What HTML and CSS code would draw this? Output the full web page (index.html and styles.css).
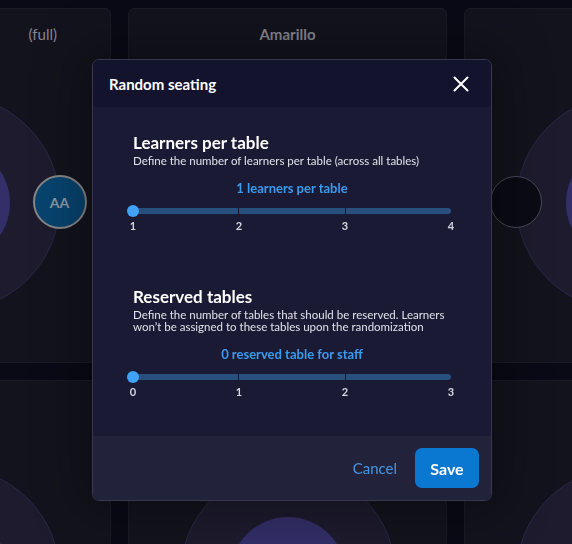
FILE: index.html
```html
<!DOCTYPE html>
<html>

<head>
    <title>Random seating</title>
    <link rel="stylesheet" href="styles.css">
</head>

<body>
    <div class="board">
        <div class="card">
            <div class="card-title card-title-end">(full)</div>
            <div class="table">
                <div class="table-core"></div>
                <div class="seat seat-right seat-taken">AA</div>
            </div>
        </div>
        <div class="card">
            <div class="card-title">Amarillo</div>
            <div class="table">
                <div class="table-core"></div>
            </div>
        </div>
        <div class="card">
            <div class="table">
                <div class="table-core"></div>
                <div class="seat seat-left"></div>
            </div>
        </div>
        <div class="card">
            <div class="table">
                <div class="table-core"></div>
            </div>
        </div>
        <div class="card">
            <div class="table">
                <div class="table-core"></div>
            </div>
        </div>
        <div class="card">
            <div class="table">
                <div class="table-core"></div>
            </div>
        </div>
    </div>

    <div class="backdrop">
        <div class="modal">
            <div class="modal-header">
                <h2>Random seating</h2>
                <button class="close" aria-label="Close">
                    <svg width="16" height="16" viewBox="0 0 16 16">
                        <path d="M1.5 1.5 L14.5 14.5 M14.5 1.5 L1.5 14.5" stroke="#fff" stroke-width="2" stroke-linecap="round" />
                    </svg>
                </button>
            </div>

            <div class="modal-body">
                <div class="field">
                    <h3>Learners per table</h3>
                    <p>Define the number of learners per table (across all tables)</p>
                    <div class="value">1 learners per table</div>
                    <div class="slider">
                        <div class="track"><span></span><span></span><span></span></div>
                        <div class="thumb"></div>
                    </div>
                    <div class="marks"><span>1</span><span>2</span><span>3</span><span>4</span></div>
                </div>

                <div class="field">
                    <h3>Reserved tables</h3>
                    <p>Define the number of tables that should be reserved. Learners won’t be assigned to these tables upon the randomization</p>
                    <div class="value">0 reserved table for staff</div>
                    <div class="slider">
                        <div class="track"><span></span><span></span><span></span></div>
                        <div class="thumb"></div>
                    </div>
                    <div class="marks"><span>0</span><span>1</span><span>2</span><span>3</span></div>
                </div>
            </div>

            <div class="modal-footer">
                <button class="button-link">Cancel</button>
                <button class="button">Save</button>
            </div>
        </div>
    </div>
</body>

</html>
```

FILE: styles.css
```css
html,
body {
    margin: 0;
    height: 100%;
    overflow: hidden;
}

body {
    background-color: #0a0a16;
    font-family: Lato, "Open Sans", sans-serif;
}

/* seating board behind the dialog */
.board {
    display: grid;
    grid-template-columns: repeat(3, 319px);
    grid-auto-rows: 355px;
    gap: 17px;
    padding-top: 8px;
    margin-left: -208px;
}

.card {
    position: relative;
    overflow: hidden;
    background-color: #13131d;
    border: 1px solid #1b1b27;
    border-radius: 6px;
}

.card-title {
    padding-top: 16px;
    text-align: center;
    font-size: 15px;
    font-weight: 700;
    color: #85858f;
    white-space: nowrap;
}

/* only the tail of this title is on screen */
.card-title-end {
    text-align: right;
    padding-right: 53px;
    font-weight: 400;
}

.table {
    position: absolute;
    top: 86px;
    left: 50%;
    width: 214px;
    height: 214px;
    margin-left: -108px;
    border-radius: 50%;
    background-color: #1d1b2d;
    border: 1px solid #2b284b;
    display: flex;
    align-items: center;
    justify-content: center;
}

.table-core {
    width: 116px;
    height: 116px;
    border-radius: 50%;
    background-color: #332f69;
}

.seat {
    position: absolute;
    top: 80px;
    width: 50px;
    height: 50px;
    border-radius: 50%;
    background-color: #0b0b16;
    border: 1px solid #4b4b55;
    display: flex;
    align-items: center;
    justify-content: center;
    font-size: 14px;
    font-weight: 700;
    color: #8a98a6;
}

.seat-right {
    right: -28px;
}

.seat-left {
    left: -27px;
}

.seat-taken {
    top: 79px;
    background-color: #07446f;
    border: 2px solid #878787;
}

/* dialog */
.backdrop {
    position: fixed;
    top: 0;
    left: 0;
    right: 0;
    bottom: 0;
    padding: 59px 0 0 92px;
}

.modal {
    width: 398px;
    border: 1px solid #37374f;
    border-radius: 7px;
    overflow: hidden;
    box-shadow: 0 0 50px 10px rgba(0, 0, 0, 0.35);
}

.modal-header {
    display: flex;
    align-items: center;
    justify-content: space-between;
    height: 47px;
    padding: 0 22px 0 16px;
    background-color: #13132e;
}

.modal-header h2 {
    margin: 0;
    font-size: 15px;
    font-weight: 700;
    color: #fff;
}

.close {
    background: none;
    border: none;
    padding: 0;
    display: flex;
    cursor: pointer;
}

.modal-body {
    background-color: #1a1a35;
    padding: 25px 40px 38px 40px;
    display: flex;
    flex-direction: column;
    gap: 54px;
}

.field h3 {
    margin: 0;
    font-size: 17px;
    line-height: 22px;
    font-weight: 700;
    color: #fff;
}

.field p {
    margin: 1px 0 0;
    font-size: 11.5px;
    line-height: 12px;
    color: #e2e2ea;
}

.value {
    margin-top: 13px;
    text-align: center;
    font-size: 13px;
    line-height: 16px;
    font-weight: 700;
    color: #3b9bef;
}

.slider {
    position: relative;
    margin-top: 9px;
    height: 12px;
    display: flex;
    align-items: center;
}

.track {
    display: flex;
    gap: 1px;
    width: 100%;
    height: 6px;
    background-color: #16162d;
    border-radius: 0 3px 3px 0;
    overflow: hidden;
}

.track span {
    flex: 1;
    background-color: #27507f;
}

.thumb {
    position: absolute;
    left: -6px;
    top: 0;
    width: 12px;
    height: 12px;
    border-radius: 50%;
    background-color: #40a2f6;
}

.marks {
    display: flex;
    justify-content: space-between;
    margin-top: 2px;
    font-size: 11px;
    line-height: 13px;
    font-weight: 700;
    color: #d6d6de;
}

.marks span {
    width: 0;
    display: flex;
    justify-content: center;
}

.modal-footer {
    display: flex;
    align-items: center;
    justify-content: flex-end;
    gap: 18px;
    height: 64px;
    padding: 0 12px;
    background-color: #22223a;
}

.button-link {
    background: none;
    border: none;
    padding: 0;
    font-family: inherit;
    font-size: 15px;
    color: #4795e2;
    cursor: pointer;
}

.button {
    background-color: #0a78d1;
    color: #fff;
    border: none;
    border-radius: 7px;
    width: 64px;
    height: 40px;
    font-family: inherit;
    font-size: 16px;
    font-weight: 700;
    cursor: pointer;
}
```
